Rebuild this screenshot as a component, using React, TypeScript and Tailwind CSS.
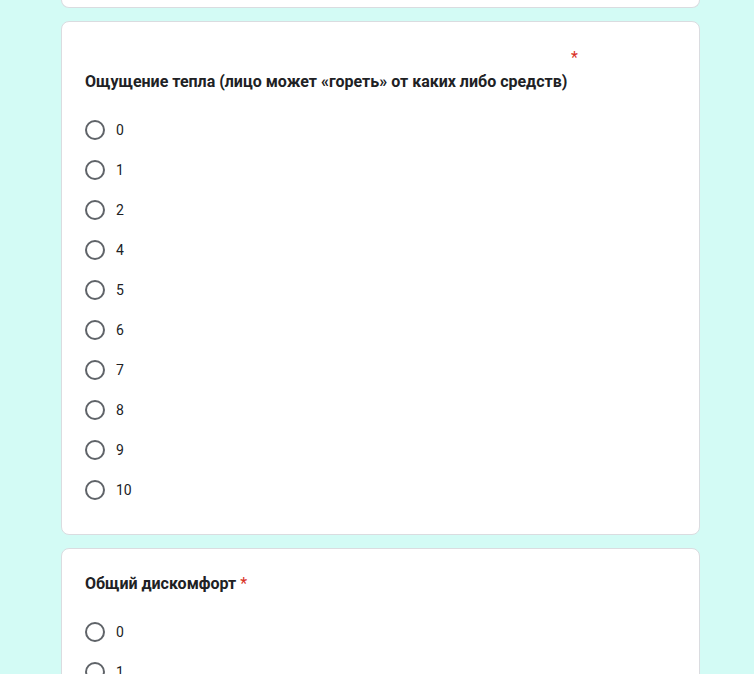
import React from "react";

const Radio = ({ label }: { label: string }) => (
  <div className="flex items-center h-10">
    <div className="w-5 h-5 rounded-full border-2 border-[#5f6368] shrink-0" />
    <span className="ml-[11px] text-[14px] leading-5 text-[#202124]">{label}</span>
  </div>
);

export default function App() {
  const opts1 = ["0", "1", "2", "4", "5", "6", "7", "8", "9", "10"];
  return (
    <div
      className="min-h-[674px] bg-[#d3fbf5] overflow-hidden"
      style={{ fontFamily: "Roboto, 'Noto Sans', sans-serif" }}
    >
      <div className="ml-[61px] w-[639px] flex flex-col gap-[13px]">
        <div className="h-[8px] bg-white border border-t-0 border-[#dadce0] rounded-b-lg" />
        <div className="bg-white border border-[#dadce0] rounded-lg px-[23px] pt-6 pb-6">
          <div className="h-6 leading-6 text-[16px] pl-[486px] text-[#d93025]">*</div>
          <div className="text-[16px] leading-6 font-bold text-[#202124]">
            Ощущение тепла (лицо может «гореть» от каких либо средств)
          </div>
          <div className="mt-4 flex flex-col">
            {opts1.map((o) => (
              <Radio key={o} label={o} />
            ))}
          </div>
        </div>
        <div className="bg-white border border-[#dadce0] rounded-lg px-[23px] pt-6 pb-6">
          <div className="text-[16px] leading-6 font-bold text-[#202124] -mt-px">
            Общий дискомфорт <span className="text-[#d93025] font-normal">*</span>
          </div>
          <div className="mt-4 flex flex-col">
            {["0", "1", "2", "3"].map((o) => (
              <Radio key={o} label={o} />
            ))}
          </div>
        </div>
      </div>
    </div>
  );
}
